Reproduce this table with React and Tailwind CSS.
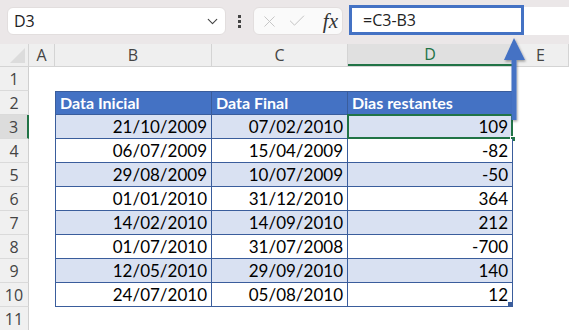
import { ChevronDown, X, Check } from "lucide-react";

const rows = [
  ["21/10/2009", "07/02/2010", "109"],
  ["06/07/2009", "15/04/2009", "-82"],
  ["29/08/2009", "10/07/2009", "-50"],
  ["01/01/2010", "31/12/2010", "364"],
  ["14/02/2010", "14/09/2010", "212"],
  ["01/07/2010", "31/07/2008", "-700"],
  ["12/05/2010", "29/09/2010", "140"],
  ["24/07/2010", "05/08/2010", "12"],
];

const cols = [
  { key: "A", w: "w-[26px]" },
  { key: "B", w: "w-[157px]" },
  { key: "C", w: "w-[136px]" },
  { key: "D", w: "w-[165px]" },
  { key: "E", w: "flex-1" },
];

const cellFont = { fontFamily: "Lato, 'Open Sans', sans-serif" };

function RowHeader({ n, active }) {
  return (
    <div
      className={`w-[29px] shrink-0 h-full flex items-center justify-center text-[16px] text-[#444] border-b border-[#dadada] ${
        active ? "bg-[#dcdcdc] border-r-2 border-r-[#217346]" : "bg-[#f0f0f0] border-r border-r-[#cfcfcf]"
      }`}
    >
      {n}
    </div>
  );
}

function DataRow({ n, data, band, selected, last }) {
  const bg = band ? "bg-[#d9e1f2]" : "bg-white";
  return (
    <div className="flex h-[24px]">
      <RowHeader n={n} active={selected} />
      <div className="w-[26px] shrink-0" />
      <div className={`w-[157px] shrink-0 ${bg} border-l border-r border-b border-[#3a5d9c] flex items-center justify-end pr-[4px] text-[17px] text-black`} style={cellFont}>
        {data[0]}
      </div>
      <div className={`w-[136px] shrink-0 ${bg} border-r border-b border-[#3a5d9c] flex items-center justify-end pr-[4px] text-[17px] text-black`} style={cellFont}>
        {data[1]}
      </div>
      <div className={`relative w-[165px] shrink-0 ${bg} border-r border-b border-[#3a5d9c] flex items-center justify-end pr-[4px] text-[17px] text-black`} style={cellFont}>
        {data[2]}
        {selected && (
          <>
            <div className="absolute -left-px -top-px -right-px -bottom-px border-2 border-[#217346]" />
            <div className="absolute -right-[4px] -bottom-[4px] w-[6px] h-[6px] bg-[#217346] border border-white" />
          </>
        )}
        {last && <div className="absolute -right-px -bottom-px w-[5px] h-[5px] bg-[#3a5d9c]" />}
      </div>
      <div className="flex-1" />
    </div>
  );
}

function EmptyRow({ n }) {
  return (
    <div className="flex h-[24px]">
      <RowHeader n={n} />
      <div className="flex-1 bg-white" />
    </div>
  );
}

export default function App() {
  return (
    <div className="relative w-[569px] h-[330px] overflow-hidden bg-white" style={{ fontFamily: "'Open Sans', 'Noto Sans', sans-serif" }}>
      {/* formula bar */}
      <div className="h-[44px] bg-[#ebe7e8] flex items-start pt-[7px] pl-[7px]">
        <div className="w-[219px] h-[28px] bg-white rounded-[6px] border border-[#e2dede] flex items-center justify-between pl-[6px] pr-[4px] text-[16px] text-[#222]">
          <span>D3</span>
          <ChevronDown size={17} strokeWidth={1.6} className="text-[#444]" />
        </div>
        <div className="w-[27px] h-[28px] flex flex-col items-center justify-center gap-[2px]">
          <span className="w-[3px] h-[3px] bg-[#444]" />
          <span className="w-[3px] h-[3px] bg-[#444]" />
          <span className="w-[3px] h-[3px] bg-[#444]" />
        </div>
        <div className="w-[90px] h-[28px] bg-[#fafafa] rounded-[6px] border border-[#e2dede] flex items-center pl-[6px] pr-[4px]">
          <X size={19} strokeWidth={1.2} className="text-[#c4c4c4]" />
          <Check size={20} strokeWidth={1.2} className="ml-[8px] text-[#c4c4c4]" />
          <span className="ml-auto text-[21px] italic text-[#333] leading-none" style={{ fontFamily: "'Liberation Serif', serif" }}>
            fx
          </span>
        </div>
        <div className="ml-[6px] -mt-[2px] w-[175px] h-[30px] bg-white border-[3px] border-[#4472c4] flex items-center pl-[11px] text-[16px] text-[#222]">
          =C3-B3
        </div>
        <div className="flex-1 h-[28px] bg-white" />
      </div>

      {/* column headers */}
      <div className="flex h-[23px] bg-[#efefef] border-b border-[#d4d4d4]">
        <div className="relative w-[29px] shrink-0 border-r border-[#d4d4d4]">
          <div className="absolute right-[3px] bottom-[3px] w-0 h-0 border-l-[15px] border-l-transparent border-b-[15px] border-b-[#dcdcdc]" />
        </div>
        {cols.map((c) => (
          <div
            key={c.key}
            className={`${c.w} shrink-0 flex items-center justify-center text-[16px] border-r border-[#d4d4d4] ${
              c.key === "D" ? "bg-[#e0e0e0] text-[#217346] border-b-2 border-b-[#217346]" : "text-[#444]"
            }`}
          >
            {c.key}
          </div>
        ))}
      </div>

      <EmptyRow n={1} />

      {/* header row of the table */}
      <div className="flex h-[24px]">
        <RowHeader n={2} />
        <div className="w-[26px] shrink-0" />
        {["Data Inicial", "Data Final", "Dias restantes"].map((t, i) => (
          <div
            key={t}
            className={`${["w-[157px]", "w-[136px]", "w-[165px]"][i]} shrink-0 bg-[#4472c4] border-t border-r border-b border-[#3a5d9c] ${
              i === 0 ? "border-l" : ""
            } flex items-center pl-[4px] text-[16px] font-bold text-white`}
            style={cellFont}
          >
            {t}
          </div>
        ))}
        <div className="flex-1" />
      </div>

      {rows.map((r, i) => (
        <DataRow key={i} n={i + 3} data={r} band={i % 2 === 0} selected={i === 0} last={i === rows.length - 1} />
      ))}

      <EmptyRow n={11} />

      {/* pointer arrow to the formula */}
      <svg className="absolute left-[500px] top-[34px]" width="30" height="92" viewBox="0 0 30 92">
        <defs>
          <filter id="sh" x="-50%" y="-20%" width="200%" height="140%">
            <feDropShadow dx="1" dy="1.5" stdDeviation="1.2" floodColor="#000" floodOpacity="0.35" />
          </filter>
        </defs>
        <g filter="url(#sh)" fill="#4472c4">
          <polygon points="14,4 25,26 4,26" />
          <rect x="11.5" y="25" width="5" height="61" />
        </g>
      </svg>
    </div>
  );
}
